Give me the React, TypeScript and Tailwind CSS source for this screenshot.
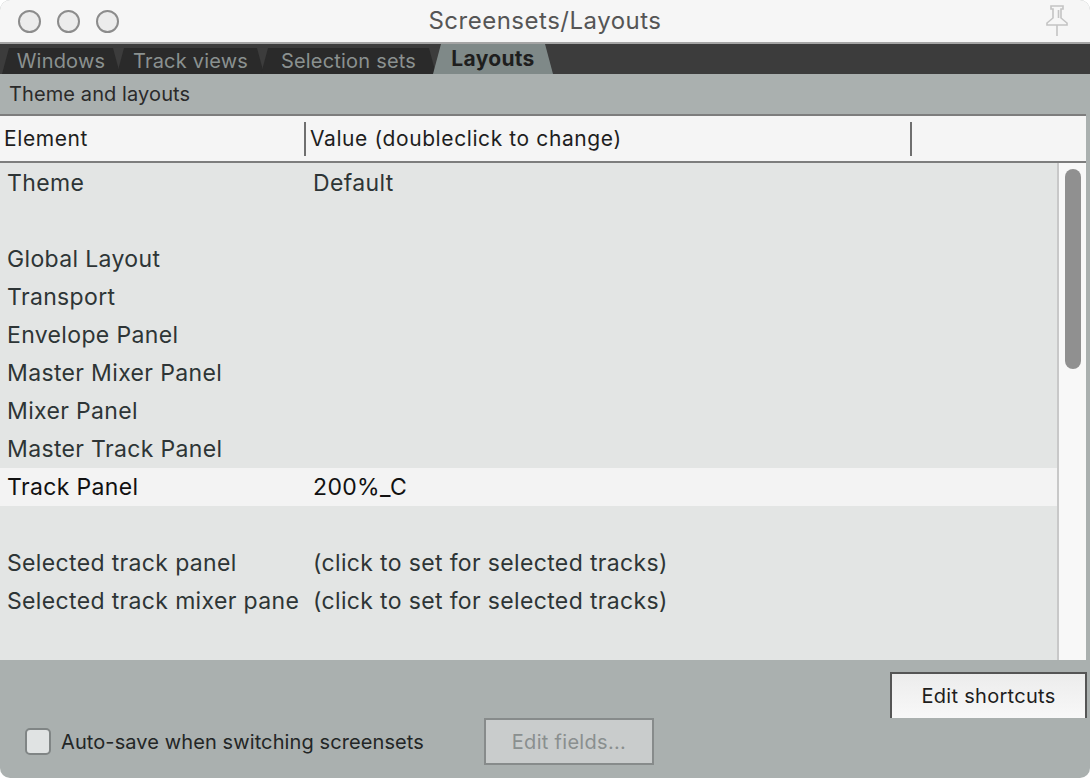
import React from "react"

const rows: { name: string; value?: string; selected?: boolean }[] = [
  { name: "Theme", value: "Default" },
  { name: "" },
  { name: "Global Layout" },
  { name: "Transport" },
  { name: "Envelope Panel" },
  { name: "Master Mixer Panel" },
  { name: "Mixer Panel" },
  { name: "Master Track Panel" },
  { name: "Track Panel", value: "200%_C", selected: true },
  { name: "" },
  { name: "Selected track panel", value: "(click to set for selected tracks)" },
  { name: "Selected track mixer pane", value: "(click to set for selected tracks)" },
]

const tabs = [
  { label: "Windows", w: "w-[118px]" },
  { label: "Track views", w: "w-[147px]" },
  { label: "Selection sets", w: "w-[175px]" },
]

function PinIcon() {
  return (
    <svg width="30" height="34" viewBox="0 0 30 34" fill="none" stroke="#c4c4c4" strokeWidth="1.6">
      <path d="M9 2h12v3h-2v9l6 5v2H5v-2l6-5V5H9z" fill="#f6f6f6" />
      <path d="M15 21v11" />
      <path d="M16.5 6v8" />
    </svg>
  )
}

export default function App() {
  return (
    <div className="h-[778px] w-[1090px] bg-white" style={{ fontFamily: "Inter, 'Noto Sans', sans-serif" }}>
      <div className="flex h-full w-full flex-col overflow-hidden rounded-[10px] bg-[#aab0af]">
        {/* title bar */}
        <div className="relative flex h-[44px] shrink-0 items-center justify-center border-b-2 border-[#a5a5a5] bg-[#f6f6f6]">
          <div className="absolute left-[18px] top-[10px] flex gap-[16px]">
            <span className="h-[23px] w-[23px] rounded-full border-2 border-[#8c8c8c] bg-[#ececec]" />
            <span className="h-[23px] w-[23px] rounded-full border-2 border-[#8c8c8c] bg-[#ececec]" />
            <span className="h-[23px] w-[23px] rounded-full border-2 border-[#8c8c8c] bg-[#ececec]" />
          </div>
          <span className="text-[24px] tracking-[0.5px] text-[#555]">Screensets/Layouts</span>
          <div className="absolute right-[18px] top-[4px]">
            <PinIcon />
          </div>
        </div>

        {/* tab bar */}
        <div className="flex h-[30px] shrink-0 items-end bg-[#3c3c3c] pl-[2px]">
          {tabs.map((t) => (
            <div
              key={t.label}
              className={`${t.w} -mr-[3px] flex h-[26px] items-center justify-center bg-[#2a2a2a] pb-[1px] text-[20px] leading-none tracking-[0.2px] text-[#8a9190] [clip-path:polygon(0_100%,7px_0,calc(100%-7px)_0,100%_100%)]`}
            >
              {t.label}
            </div>
          ))}
          <div className="flex h-[30px] w-[120px] items-center justify-center bg-[#7f8988] pb-[1px] text-[21px] font-bold leading-none tracking-[0.3px] text-[#1e1e1e] [clip-path:polygon(0_100%,8px_0,calc(100%-8px)_0,100%_100%)]">
            Layouts
          </div>
        </div>

        {/* section label */}
        <div className="flex h-[40px] shrink-0 items-center px-[9px] text-[20px] tracking-[0.1px] text-[#2a2a2a]">
          Theme and layouts
        </div>

        {/* table */}
        <div className="mr-[4px] flex shrink-0 flex-col">
          <div className="flex h-[49px] items-center border-y-2 border-[#7d7d7d] bg-[#f5f5f5] text-[21px] tracking-[0.6px] text-[#1e1e1e]">
            <div className="w-[304px] pl-[4px]">Element</div>
            <div className="h-[34px] w-[2px] bg-[#6f6f6f]" />
            <div className="w-[604px] pl-[4px]">Value (doubleclick to change)</div>
            <div className="h-[34px] w-[2px] bg-[#6f6f6f]" />
          </div>
          <div className="flex h-[497px]">
            <div className="flex-1 bg-[#e3e5e4] pt-[1px]">
              {rows.map((r, i) => (
                <div
                  key={i}
                  className={`flex h-[38px] items-center text-[23px] tracking-[0.35px] ${
                    r.selected ? "bg-[#f3f3f3] text-[#111]" : "text-[#2e3536]"
                  }`}
                >
                  <div className="w-[306px] whitespace-nowrap pl-[7px]">{r.name}</div>
                  <div className="whitespace-nowrap pl-[7px]">{r.value}</div>
                </div>
              ))}
            </div>
            <div className="w-[29px] border-l-2 border-[#c8c8c8] bg-[#f8f8f8] pl-[6px] pt-[6px]">
              <div className="h-[200px] w-[16px] rounded-full bg-[#909090]" />
            </div>
          </div>
        </div>

        {/* bottom */}
        <div className="flex flex-1 flex-col">
          <div className="flex justify-end pr-[3px] pt-[12px]">
            <button className="flex h-[46px] w-[197px] items-center justify-center border-2 border-b-0 border-[#555] bg-gradient-to-b from-[#ececec] to-[#f8f8f8] text-[20px] tracking-[0.3px] text-[#1e1e1e]">
              Edit shortcuts
            </button>
          </div>
          <div className="flex items-center pl-[25px]">
            <span className="h-[27px] w-[26px] rounded-[5px] border-2 border-[#808585] bg-[#e0e3e3]" />
            <span className="ml-[10px] text-[20px] tracking-[0.1px] text-[#232626]">Auto-save when switching screensets</span>
            <button className="ml-[60px] flex h-[47px] w-[170px] items-center justify-center border-2 border-[#878b8b] bg-[#c9cccc] text-[20px] tracking-[0.3px] text-[#8a8f8f]">
              Edit fields...
            </button>
          </div>
        </div>
      </div>
    </div>
  )
}
